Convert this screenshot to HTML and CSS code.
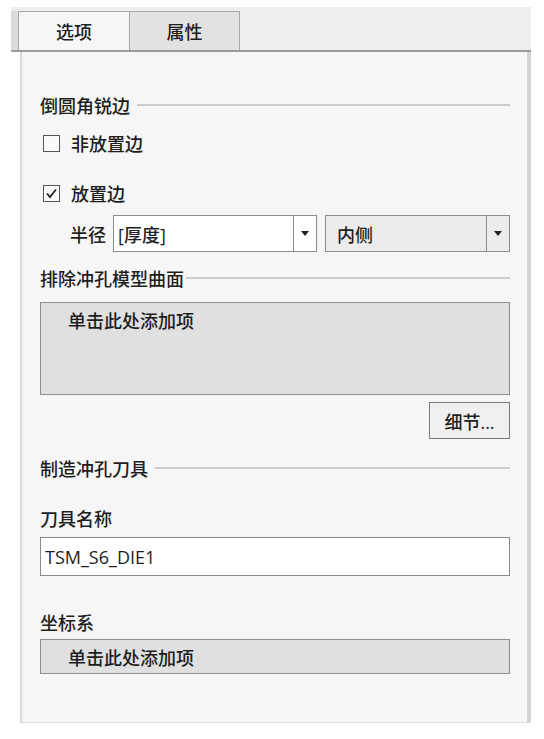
FILE: index.html
```html
<!DOCTYPE html>
<html lang="zh-CN">
<head>
    <meta charset="UTF-8">
    <title>冲孔选项</title>
    <link rel="stylesheet" href="styles.css">
</head>
<body>
    <div class="window">
        <div class="tab-bar">
            <div class="tab-stub"></div>
            <div class="tab active">选项</div>
            <div class="tab">属性</div>
        </div>
        <div class="panel">
            <div class="group-title first"><span>倒圆角锐边</span><i></i></div>
            <label class="check row-1"><span class="box"></span>非放置边</label>
            <label class="check row-2"><span class="box checked">
                <svg width="13" height="13" viewBox="0 0 13 13"><path d="M2 6.5 L5 10 L11 2.5" fill="none" stroke="#222" stroke-width="1.8"/></svg>
            </span>放置边</label>
            <div class="radius-row">
                <span class="radius-label">半径</span>
                <div class="combo white"><span class="combo-text">[厚度]</span><span class="combo-arrow"><b></b></span></div>
                <div class="combo gray"><span class="combo-text">内侧</span><span class="combo-arrow"><b></b></span></div>
            </div>
            <div class="group-title second"><span>排除冲孔模型曲面</span><i></i></div>
            <div class="listbox tall">单击此处添加项</div>
            <div class="button-row"><button class="detail-btn">细节...</button></div>
            <div class="group-title third"><span>制造冲孔刀具</span><i></i></div>
            <div class="field-label tool-label">刀具名称</div>
            <div class="text-input">TSM_S6_DIE1</div>
            <div class="field-label csys-label">坐标系</div>
            <div class="listbox short">单击此处添加项</div>
        </div>
    </div>
</body>
</html>
```

FILE: styles.css
```css
body {
    margin: 0;
    background-color: #fff;
    font-family: "Open Sans", "Noto Sans CJK SC", sans-serif;
    font-size: 18px;
    font-weight: 500;
    color: #1e1e1e;
}
.window {
    margin: 7px 0 0 11px;
    width: 520px;
}
.tab-bar {
    height: 45px;
    box-sizing: border-box;
    background-color: #eeeeee;
    border-bottom: 2px solid #9a9a9a;
    display: flex;
    align-items: flex-end;
}
.tab-stub {
    width: 7px;
    height: 39px;
    background-color: #dcdcdc;
}
.tab {
    width: 111px;
    height: 39px;
    box-sizing: border-box;
    border: 1px solid #a8a8a8;
    border-bottom: none;
    background-color: #e2e2e2;
    display: flex;
    align-items: center;
    justify-content: center;
}
.tab.active {
    background-color: #f6f6f6;
    border-right: none;
}
.panel {
    margin-left: 9px;
    width: 511px;
    box-sizing: border-box;
    background-color: #f6f6f6;
    border-left: 2px solid #d9d9d9;
    border-right: 4px solid #d4d4d4;
    border-bottom: 1px solid #dddddd;
    padding: 0 17px 48px 18px;
    display: flex;
    flex-direction: column;
}
.group-title {
    display: flex;
    align-items: center;
    height: 24px;
}
.group-title i {
    flex: 1;
    height: 2px;
    background-color: #cccccc;
    margin-left: 7px;
}
.group-title.first { margin-top: 41px; }
.group-title.second { margin-top: 14px; }
.group-title.second i { margin-left: 2px; }
.group-title.third { margin-top: 17px; }
.check {
    display: flex;
    align-items: center;
    height: 24px;
    padding-left: 3px;
}
.check.row-1 { margin-top: 14px; }
.check.row-2 { margin-top: 26px; }
.box {
    width: 17px;
    height: 17px;
    box-sizing: border-box;
    border: 1.5px solid #555;
    background-color: #fafafa;
    margin-right: 11px;
    display: flex;
    align-items: center;
    justify-content: center;
}
.radius-row {
    margin-top: 10px;
    height: 37px;
    display: flex;
    align-items: center;
    padding-left: 30px;
}
.radius-label {
    width: 43px;
}
.combo {
    height: 37px;
    box-sizing: border-box;
    border: 1.5px solid #8c8c8c;
    display: flex;
}
.combo.white {
    width: 204px;
    background-color: #fff;
}
.combo.gray {
    width: 185px;
    margin-left: 8px;
    background-color: #ececec;
}
.combo-text {
    flex: 1;
    display: flex;
    align-items: center;
    padding-left: 4px;
}
.combo.gray .combo-text {
    padding-left: 11px;
}
.combo-arrow {
    width: 22px;
    border-left: 1.5px solid #8c8c8c;
    display: flex;
    align-items: center;
    justify-content: center;
}
.combo-arrow b {
    width: 0;
    height: 0;
    border-left: 4px solid transparent;
    border-right: 4px solid transparent;
    border-top: 5px solid #222;
}
.listbox {
    box-sizing: border-box;
    background-color: #e0e0e0;
    border: 1.5px solid #8e8e8e;
    padding-left: 27px;
}
.listbox.tall {
    margin-top: 12px;
    height: 93px;
    padding-top: 4px;
}
.listbox.short {
    margin-top: 5px;
    height: 35px;
    display: flex;
    align-items: center;
}
.button-row {
    margin-top: 7px;
    display: flex;
    justify-content: flex-end;
}
.detail-btn {
    width: 81px;
    height: 37px;
    font: inherit;
    color: inherit;
    background-color: #f0f0f0;
    border: 1.5px solid #7a7a7a;
    padding: 0;
}
.field-label {
    height: 24px;
    display: flex;
    align-items: center;
}
.tool-label { margin-top: 26px; }
.csys-label { margin-top: 34px; }
.text-input {
    margin-top: 7px;
    height: 39px;
    box-sizing: border-box;
    background-color: #fff;
    border: 1.5px solid #8a8a8a;
    padding-left: 4px;
    display: flex;
    align-items: center;
}
```
